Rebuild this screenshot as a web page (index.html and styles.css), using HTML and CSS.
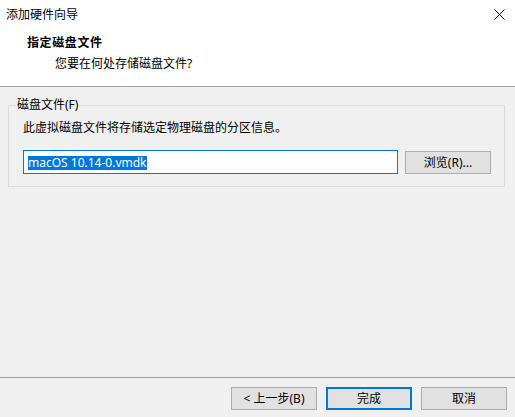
FILE: index.html
```html
<!DOCTYPE html>
<html lang="zh-CN">
<head>
    <meta charset="UTF-8">
    <title>添加硬件向导</title>
    <link rel="stylesheet" href="styles.css">
</head>
<body>
<div id="wizard">

    <div class="top">
        <div class="titlebar">
            <span class="title">添加硬件向导</span>
            <span class="close">
                <svg width="11" height="11" viewBox="0 0 11 11">
                    <path d="M0.5 0.5 L10.5 10.5 M10.5 0.5 L0.5 10.5" stroke="#000" stroke-width="1" fill="none"/>
                </svg>
            </span>
        </div>
        <div class="heading">
            <h1>指定磁盘文件</h1>
            <p>您要在何处存储磁盘文件?</p>
        </div>
    </div>

    <div class="body">
        <fieldset class="group">
            <legend>磁盘文件(<u>F</u>)</legend>
            <p class="desc">此虚拟磁盘文件将存储选定物理磁盘的分区信息。</p>
            <div class="file_row">
                <div class="file_input"><span class="sel">macOS 10.14-0.vmdk</span></div>
                <button class="btn browse">浏览(R)...</button>
            </div>
        </fieldset>
    </div>

    <div class="footer">
        <button class="btn">&lt; 上一步(B)</button>
        <button class="btn default">完成</button>
        <button class="btn">取消</button>
    </div>

</div>
</body>
</html>
```

FILE: styles.css
```css
html, body {
    margin: 0;
    padding: 0;
}

body {
    font-family: "Noto Sans", "Noto Sans CJK SC", sans-serif;
    font-size: 12px;
    color: #000;
    background-color: #f0f0f0;
}

#wizard {
    width: 515px;
    height: 417px;
    display: flex;
    flex-direction: column;
}

.top {
    height: 86px;
    background-color: #fff;
    border-bottom: 1px solid #a0a0a0;
}

.titlebar {
    height: 29px;
    display: flex;
    align-items: center;
    justify-content: space-between;
    padding: 0 10px 0 6px;
}

.title {
    line-height: 16px;
}

.close {
    display: flex;
    margin-top: -1px;
}

.heading {
    padding: 6px 0 0 27px;
}

.heading h1 {
    font-size: 12px;
    font-weight: bold;
    line-height: 16px;
    margin: 0;
    letter-spacing: 0.6px;
}

.heading p {
    margin: 5px 0 0 28px;
    line-height: 16px;
}

.body {
    padding: 10px 10px 0 8px;
}

.group {
    width: 497px;
    box-sizing: border-box;
    margin: 0;
    padding: 7px 13px 12px 14px;
    border: 1px solid #dcdcdc;
}

.group legend {
    padding: 0 1px;
    margin-left: -7px;
    line-height: 16px;
}

.group legend u {
    text-decoration: none;
}

.desc {
    margin: 0;
    line-height: 16px;
}

.file_row {
    display: flex;
    align-items: flex-start;
    gap: 7px;
    margin-top: 14px;
}

.file_input {
    box-sizing: border-box;
    width: 375px;
    height: 24px;
    border: 1px solid #0078d7;
    background-color: #fff;
    padding: 3px 0 0 4px;
}

.sel {
    display: inline-block;
    background-color: #0078d7;
    color: #fff;
    line-height: 14px;
    height: 14px;
}

.btn {
    box-sizing: border-box;
    width: 86px;
    height: 23px;
    border: 1px solid #adadad;
    background-color: #e1e1e1;
    font-family: "Noto Sans", "Noto Sans CJK SC", sans-serif;
    font-size: 12px;
    color: #000;
    padding: 0;
    line-height: 16px;
}

.browse {
    margin-top: 1px;
}

.footer {
    margin-top: auto;
    border-top: 1px solid #a0a0a0;
    display: flex;
    justify-content: flex-end;
    gap: 9px;
    padding: 9px 8px 7px 0;
}

.btn.default {
    border: 2px solid #0078d7;
}
```
